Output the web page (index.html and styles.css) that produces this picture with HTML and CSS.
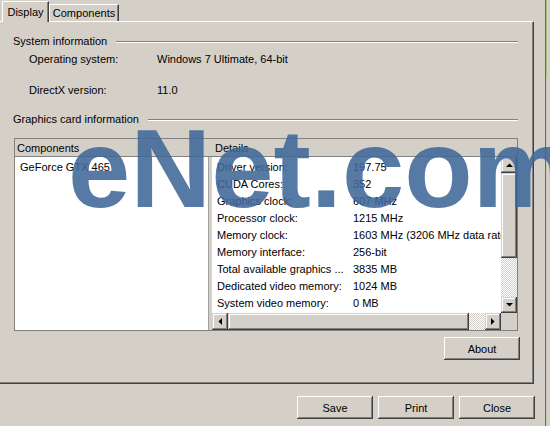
FILE: index.html
```html
<!DOCTYPE html>
<html>
<head>
<meta charset="utf-8">
<title>System Information</title>
<link rel="stylesheet" href="styles.css">
</head>
<body>
<div class="screen">
  <div class="dialog">
    <div class="tabs">
      <div class="tab tab-active">Display</div>
      <div class="tab tab-inactive">Components</div>
    </div>

    <div class="page">
      <div class="group-title"><span>System information</span><i class="etch"></i></div>
      <div class="info-row os"><span class="info-label">Operating system:</span><span>Windows 7 Ultimate, 64-bit</span></div>
      <div class="info-row dx"><span class="info-label">DirectX version:</span><span>11.0</span></div>

      <div class="group-title gc"><span>Graphics card information</span><i class="etch"></i></div>
      <div class="listbox">
        <div class="lb-head">
          <span class="col-left">Components</span>
          <span class="col-right">Details</span>
        </div>
        <div class="lb-body">
          <div class="pane-left">
            <div class="item">GeForce GTX 465</div>
          </div>
          <div class="splitter"></div>
          <div class="pane-right">
            <div class="detail-list">
              <div class="detail-row"><span>Driver version:</span><span>197.75</span></div>
              <div class="detail-row"><span>CUDA Cores:</span><span>352</span></div>
              <div class="detail-row"><span>Graphics clock:</span><span>607 MHz</span></div>
              <div class="detail-row"><span>Processor clock:</span><span>1215 MHz</span></div>
              <div class="detail-row"><span>Memory clock:</span><span>1603 MHz (3206 MHz data rate)</span></div>
              <div class="detail-row"><span>Memory interface:</span><span>256-bit</span></div>
              <div class="detail-row"><span>Total available graphics ...</span><span>3835 MB</span></div>
              <div class="detail-row"><span>Dedicated video memory:</span><span>1024 MB</span></div>
              <div class="detail-row"><span>System video memory:</span><span>0 MB</span></div>
            </div>
            <div class="vscroll">
              <div class="sb-btn"><svg width="7" height="4" viewBox="0 0 7 4"><path d="M0 4H7L3.5 0.5Z"/></svg></div>
              <div class="sb-thumb sb-thumb-v"></div>
              <div class="sb-track"></div>
              <div class="sb-btn"><svg width="7" height="4" viewBox="0 0 7 4"><path d="M0 0H7L3.5 3.5Z"/></svg></div>
            </div>
            <div class="hscroll">
              <div class="sb-btn"><svg width="4" height="7" viewBox="0 0 4 7"><path d="M4 0V7L0.5 3.5Z"/></svg></div>
              <div class="sb-thumb sb-thumb-h"></div>
              <div class="sb-track"></div>
              <div class="sb-btn"><svg width="4" height="7" viewBox="0 0 4 7"><path d="M0 0V7L3.5 3.5Z"/></svg></div>
            </div>
            <div class="corner"></div>
          </div>
        </div>
      </div>

      <div class="about-row"><button class="btn">About</button></div>
    </div>

    <div class="actions">
      <button class="btn">Save</button>
      <button class="btn">Print</button>
      <button class="btn">Close</button>
    </div>
  </div>

  <div class="edge"><div class="edge-line"></div></div>

  <div class="watermark">eNet.com</div>
</div>
</body>
</html>
```
FILE: styles.css
```css
* { box-sizing: border-box; }

body {
  margin: 0;
  background: #d4d0c8;
  font: 11px/14px "Liberation Sans", Arial, sans-serif;
  color: #000;
}

.screen {
  position: relative;
  width: 550px;
  height: 426px;
  overflow: hidden;
  display: flex;
}

.dialog {
  width: 535px;
  display: flex;
  flex-direction: column;
}

/* tab strip */
.tabs {
  display: flex;
  align-items: flex-end;
  height: 21px;
  padding-left: 2px;
}

.tab {
  display: flex;
  align-items: center;
  justify-content: center;
  background: #d4d0c8;
  border-left: 1px solid #fff;
  border-top: 1px solid #fff;
  border-right: 1px solid #404040;
  box-shadow: inset -1px 0 #808080;
}

.tab-active {
  width: 47px;
  height: 21px;
  padding-bottom: 1px;
  margin-bottom: -1px;
  position: relative;
  z-index: 1;
}

.tab-inactive {
  width: 70px;
  height: 17px;
}

/* tab page */
.page {
  width: 534px;
  height: 363px;
  border-top: 1px solid #fff;
  border-right: 1px solid #404040;
  border-bottom: 1px solid #404040;
  box-shadow: inset -1px -1px #808080;
  padding: 12px 15px 0 13px;
  display: flex;
  flex-direction: column;
}

.group-title {
  display: flex;
  align-items: center;
  height: 14px;
  gap: 9px;
}

.etch {
  flex: 1;
  height: 2px;
  margin-top: 1px;
  border-top: 1px solid #808080;
  border-bottom: 1px solid #fff;
}

.gc { margin-top: 15px; }

.info-row {
  display: flex;
  height: 14px;
  padding-left: 16px;
}

.info-label { width: 128px; flex: none; }

.os { margin-top: 4px; }
.dx { margin-top: 17px; }

/* components / details list */
.listbox {
  margin: 12px 0 0 1px;
  height: 193px;
  border: 1px solid #808080;
  display: flex;
  flex-direction: column;
}

.lb-head {
  height: 18px;
  border-bottom: 1px solid #808080;
  display: flex;
  align-items: center;
  padding-left: 2px;
}

.col-left { width: 198px; flex: none; }

.lb-body {
  flex: 1;
  display: flex;
  min-height: 0;
}

.pane-left {
  width: 193px;
  background: #fff;
  padding: 2px 0 0 5px;
}

.item { height: 17px; line-height: 17px; }

.splitter {
  width: 4px;
  border-left: 1px solid #a0a0a0;
  background: #d4d0c8;
}

.pane-right {
  width: 305px;
  display: grid;
  grid-template-columns: 289px 16px;
  grid-template-rows: 156px 17px;
}

.detail-list {
  background: #fff;
  padding: 2px 0 0 5px;
  overflow: hidden;
  white-space: nowrap;
}

.detail-row {
  display: flex;
  height: 17px;
  line-height: 17px;
}

.detail-row span:first-child { width: 136px; flex: none; }

/* scrollbars */
.vscroll, .hscroll {
  display: flex;
}

.vscroll { flex-direction: column; }

.sb-btn, .sb-thumb {
  flex: none;
  background: #d4d0c8;
  box-shadow: inset -1px -1px #404040, inset 1px 1px #d4d0c8,
              inset -2px -2px #808080, inset 2px 2px #fff;
}

.sb-btn {
  width: 16px;
  height: 16px;
  display: flex;
  align-items: center;
  justify-content: center;
}

.hscroll .sb-btn { height: 17px; }

.sb-btn svg { fill: #000; display: block; }

.sb-thumb-v { height: 85px; }
.sb-thumb-h { width: 241px; }

.sb-track {
  flex: 1;
  background: conic-gradient(#fff 25%, #d4d0c8 0 50%, #fff 0 75%, #d4d0c8 0) 0 0 / 2px 2px;
}

.corner { background: #d4d0c8; }

/* push buttons */
.btn {
  width: 76px;
  height: 23px;
  border: none;
  padding: 0;
  background: #d4d0c8;
  font: 11px "Liberation Sans", Arial, sans-serif;
  color: #000;
  box-shadow: inset -1px -1px #404040, inset 1px 1px #fff,
              inset -2px -2px #808080, inset 2px 2px #d4d0c8;
}

.about-row {
  display: flex;
  justify-content: flex-end;
  margin: 6px -2px 0 0;
}

.actions {
  display: flex;
  justify-content: flex-end;
  gap: 5px;
  padding-top: 12px;
}

/* neighbouring window edge */
.edge {
  flex: 1;
  display: flex;
  padding-left: 10px;
}

.edge-line {
  width: 2px;
  border-left: 1px solid #6b6b63;
  background: linear-gradient(#b3c07a 0, #b3c07a 78px, #c8c8b8 78px);
}

/* site stamp drawn over the dialog */
.watermark {
  position: absolute;
  left: 68px;
  top: 113px;
  font: bold 112px/112px "Liberation Sans", Arial, sans-serif;
  color: rgba(64, 104, 153, 0.88);
  white-space: nowrap;
  pointer-events: none;
}
```
